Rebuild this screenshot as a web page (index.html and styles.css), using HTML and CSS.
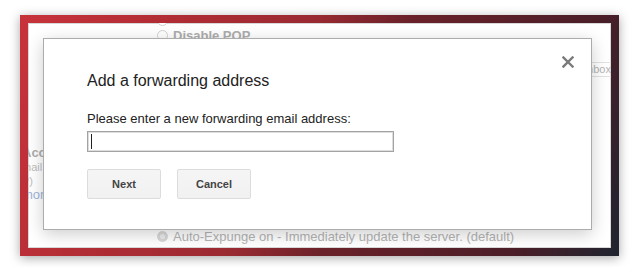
FILE: index.html
```html
<!DOCTYPE html>
<html lang="en">
<head>
<meta charset="utf-8">
<title>Add a forwarding address</title>
<link rel="stylesheet" href="styles.css">
</head>
<body>
<div class="frame">
  <div class="screen">
    <div class="page">
      <div class="side">
        <div class="side-head">Access:</div>
        <div class="side-note">mail from</div>
        <div class="side-note">P)</div>
        <div class="side-link">more</div>
      </div>
      <div class="main">
        <div class="opt opt-first"><span class="radio"></span></div>
        <div class="opt"><span class="radio"></span><span class="opt-text bold">Disable POP</span></div>
        <div class="select-row"><span class="select">Inbox</span></div>
        <div class="opt opt-last"><span class="radio checked"></span><span class="opt-text">Auto-Expunge on - Immediately update the server. (default)</span></div>
      </div>
    </div>

    <div class="modal">
      <svg class="close" width="12" height="12" viewBox="0 0 12 12" aria-label="Close">
        <path d="M1.5 1.5 L10.5 10.5 M10.5 1.5 L1.5 10.5" stroke="#7a7a7a" stroke-width="2.4" stroke-linecap="square" fill="none"/>
      </svg>
      <h1 class="title">Add a forwarding address</h1>
      <p class="label">Please enter a new forwarding email address:</p>
      <div class="field"><span class="caret"></span></div>
      <div class="actions">
        <button class="btn">Next</button>
        <button class="btn">Cancel</button>
      </div>
    </div>
  </div>
</div>
</body>
</html>
```
FILE: styles.css
```css
html, body {
  margin: 0;
  padding: 0;
  background: #ffffff;
  font-family: "Liberation Sans", Arial, sans-serif;
}

body {
  min-height: 267px;
  padding-top: 15px;
  box-sizing: border-box;
}

.frame {
  box-sizing: border-box;
  width: 599px;
  height: 241px;
  margin: 0 0 0 20px;
  padding: 8px;
  background: linear-gradient(110deg, #c8333b 0%, #b32d35 20%, #9a2a32 43%, #6a2129 57%, #4a1e28 85%, #1f2530 100%);
  box-shadow: 0 2px 10px rgba(0, 0, 0, 0.35);
}

.screen {
  position: relative;
  width: 583px;
  height: 225px;
  background: #ffffff;
  overflow: hidden;
  box-shadow: inset 0 0 0 1px #d8d8d8;
}

.page {
  display: flex;
  height: 100%;
}

.side {
  width: 134px;
  flex: none;
  padding-top: 122px;
  margin-left: -6px;
  white-space: nowrap;
}

.side-head {
  font-size: 13px;
  line-height: 15px;
  font-weight: bold;
  color: #adadad;
}

.side-note {
  font-size: 11px;
  line-height: 14px;
  color: #bdbdbd;
}

.side-link {
  font-size: 13px;
  line-height: 14px;
  color: #9db6dc;
}

.main {
  flex: 1;
  display: flex;
  flex-direction: column;
}

.opt {
  display: flex;
  align-items: center;
  gap: 5px;
  height: 15px;
  white-space: nowrap;
}

.opt-first {
  margin-top: -10px;
}

.opt-last {
  margin-top: 152px;
}

.radio {
  box-sizing: border-box;
  width: 11px;
  height: 11px;
  border-radius: 50%;
  border: 1px solid #d2d2d2;
  background: #ffffff;
  flex: none;
  margin-left: 1px;
}

.radio.checked {
  border-color: #d6d6d6;
  background: radial-gradient(circle, #ececec 0 2px, #d9d9d9 3px);
}

.opt-text {
  font-size: 13px;
  line-height: 15px;
  color: #b4b4b4;
}

.opt-text.bold {
  font-weight: bold;
  color: #adadad;
}

.select-row {
  display: flex;
  justify-content: flex-end;
  margin-top: 19px;
  margin-right: -39px;
}

.select {
  box-sizing: border-box;
  width: 80px;
  height: 15px;
  border: 1px solid #e2e2e2;
  padding-left: 13px;
  font-size: 11px;
  line-height: 13px;
  color: #b4b4b4;
}

.modal {
  position: absolute;
  left: 15px;
  top: 15px;
  box-sizing: border-box;
  width: 549px;
  height: 192px;
  padding: 33px 43px 0 43px;
  background: #ffffff;
  border: 1px solid #acacac;
  box-shadow: 0 4px 16px rgba(0, 0, 0, 0.2);
}

.close {
  position: absolute;
  top: 17px;
  right: 17px;
  display: block;
}

.title {
  margin: 0;
  font-size: 16px;
  line-height: 18px;
  font-weight: normal;
  color: #222222;
}

.label {
  margin: 21px 0 0 0;
  font-size: 13px;
  line-height: 16px;
  color: #222222;
}

.field {
  box-sizing: border-box;
  display: flex;
  align-items: center;
  width: 307px;
  height: 21px;
  margin-top: 4px;
  padding-left: 3px;
  border: 1px solid #a3a3a3;
  box-shadow: inset 0 0 0 1px #dddddd;
  background: #ffffff;
}

.caret {
  width: 1px;
  height: 15px;
  background: #222222;
}

.actions {
  display: flex;
  gap: 16px;
  margin-top: 17px;
}

.btn {
  box-sizing: border-box;
  width: 74px;
  height: 30px;
  padding: 0;
  border: 1px solid #dcdcdc;
  border-radius: 2px;
  background: linear-gradient(#f5f5f5, #f1f1f1);
  font-family: "Liberation Sans", Arial, sans-serif;
  font-size: 11px;
  font-weight: bold;
  color: #444444;
}
```
